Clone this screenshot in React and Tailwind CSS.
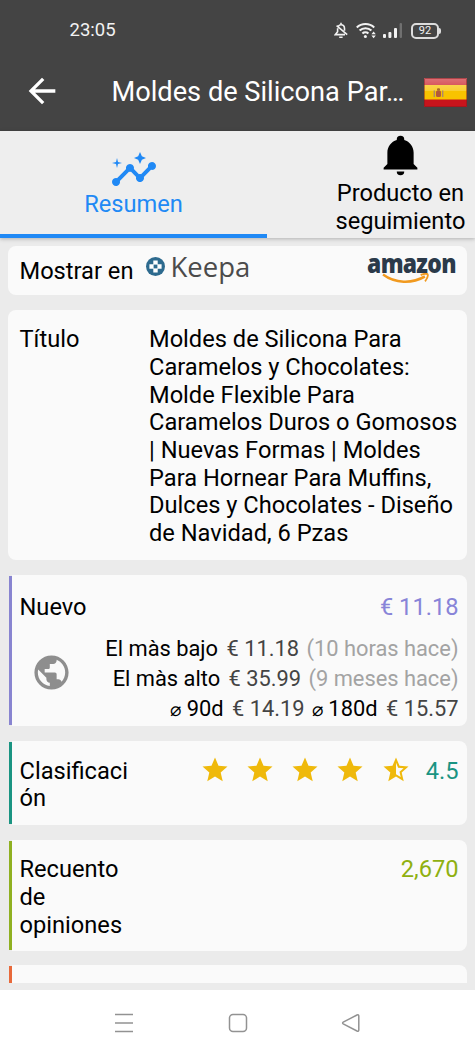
import React from "react";
import {
  MdArrowBack,
  MdInsights,
  MdPublic,
  MdStar,
  MdStarHalf,
} from "react-icons/md";

const title =
  "Moldes de Silicona Para Caramelos y Chocolates: Molde Flexible Para Caramelos Duros o Gomosos | Nuevas Formas | Moldes Para Hornear Para Muffins, Dulces y Chocolates - Diseño de Navidad, 6 Pzas";

function StatusBar() {
  return (
    <div className="flex h-[60px] items-center pr-[34px] pl-[69.5px] pt-px text-[#f2f2f2]">
      <span className="pt-px text-[18.5px]">23:05</span>
      <div className="ml-auto flex items-center">
        {/* Muted bell */}
        <svg width="14" height="17" viewBox="0 0 14 17" fill="none" stroke="currentColor" strokeWidth="1.6">
          <path d="M7 .8v1.7M4.300 4.200C5 3.200 6 2.700 7 2.700c2.200 0 3.500 1.600 3.500 3.800v2.300M3.600 6.200v3.600L1.400 12.600h9.600M5.200 15.200h3.400M2.600 3.600l10.600 9" />
        </svg>
        {/* Wifi */}
        <svg className="ml-[8px]" width="20" height="17" viewBox="0 0 20 17" fill="none" stroke="currentColor" strokeWidth="2.1">
          <path d="M.8 5.400c4.800-4.600 12.600-4.600 17.400 0M3.600 8.600c3.200-3.100 8.600-3.100 11.800 0M6.400 11.600c1.700-1.600 4.300-1.600 6 0" />
          <circle cx="9.4" cy="14.6" r="1.5" fill="currentColor" stroke="none" />
          <path d="m15.400 12.200 2.200-2.600 2.200 2.600zM15.400 13.600l2.200 2.600 2.200-2.600z" fill="currentColor" stroke="none" />
        </svg>
        {/* Signal */}
        <svg className="ml-[7px]" width="20" height="16" viewBox="0 0 20 16" fill="currentColor">
          <rect x="0" y="11" width="3" height="4" rx="1" />
          <rect x="5.4" y="9" width="3" height="6" rx="1" />
          <rect x="11" y="5" width="3" height="10" rx="1" />
          <rect x="16.6" y="0" width="2.4" height="15" rx="1" opacity=".25" />
        </svg>
        {/* Battery */}
        <div className="ml-2 flex items-center">
          <div className="flex h-4 w-[28px] items-center justify-center rounded-[5px] border-2 border-[#dcdcdc] text-[11px] leading-none">
            92
          </div>
          <div className="h-1.5 w-[2px] rounded-r bg-[#dcdcdc]" />
        </div>
      </div>
    </div>
  );
}

function SpainFlag() {
  return (
    <svg width="43" height="29" viewBox="0 0 43 29">
      <defs>
        <linearGradient id="gloss" x1="0" y1="0" x2="0" y2="1">
          <stop offset="0" stopColor="#fff" stopOpacity=".4" />
          <stop offset="1" stopColor="#fff" stopOpacity=".2" />
        </linearGradient>
      </defs>
      <rect width="43" height="29" rx="1" fill="#c8141c" />
      <rect y="7" width="43" height="14.5" fill="#f8c300" />
      <rect width="43" height="13" rx="1" fill="url(#gloss)" />
      <rect x="12" y="12.5" width="5" height="6.5" rx="1.5" fill="#b5583a" />
      <rect x="13" y="10.2" width="3" height="2.6" rx="1" fill="#a8692a" />
      <rect x="9.6" y="12.5" width="1.4" height="6.5" fill="#a98a70" />
      <rect x="18" y="12.5" width="1.4" height="6.5" fill="#a98a70" />
      <rect x=".5" y=".5" width="42" height="28" rx="1" fill="none" stroke="#7d1a20" strokeOpacity=".5" />
    </svg>
  );
}

function Header() {
  return (
    <header className="h-[131px] bg-[#444444] text-white">
      <StatusBar />
      <div className="flex h-[61px] items-center pr-2 pl-[21.5px]">
        <MdArrowBack className="size-10" />
        <h1 className="ml-[50px] w-[300px] pt-1 text-[27.2px] whitespace-nowrap">
          Moldes de Silicona Par…
        </h1>
        <div className="ml-auto pt-1">
          <SpainFlag />
        </div>
      </div>
    </header>
  );
}

function Tabs() {
  return (
    <nav className="relative z-10 flex h-[107px] overflow-x-clip bg-[#eeeeee] shadow-[0_1px_4px_rgba(0,0,0,0.25)]">
      <div className="flex w-[267px] shrink-0 flex-col items-center border-b-[4px] border-[#2089f5] pt-[15px] text-[#2089f5]">
        <MdInsights className="size-12" />
        <span className="-mt-[3px]">Resumen</span>
      </div>
      <div className="flex w-[267px] shrink-0 flex-col items-center pt-px">
        <svg className="size-[45px]" viewBox="0 0 24 24" fill="#000">
          <path d="M21 19v1H3v-1l2-2v-6c0-3.1 2.03-5.83 5-6.71V4a2 2 0 0 1 4 0v.29c2.97.88 5 3.61 5 6.71v6l2 2m-7 2a2 2 0 0 1-4 0" />
        </svg>
        <span className="mt-[3px] text-center">
          Producto en
          <br />
          seguimiento
        </span>
      </div>
    </nav>
  );
}

function KeepaLogo() {
  return (
    <div className="flex items-center gap-[5px]">
      <svg width="19" height="19" viewBox="0 0 19 19">
        <circle cx="9.5" cy="9.5" r="9.5" fill="#2d6a8e" />
        <path d="M7.3 3.4h4.4v3.9h3.9v4.4h-3.9v3.9H7.3v-3.9H3.4V7.3h3.9z" fill="#fff" />
        <path d="M7.6 7.6h3.8v3.8H7.6z" fill="#2d6a8e" />
      </svg>
      <span className="font-['Open_Sans',sans-serif] text-[27.5px] leading-[27px] text-[#4b4b4b]">
        Keepa
      </span>
    </div>
  );
}

function AmazonLogo() {
  return (
    <div className="flex origin-right scale-x-[0.88] flex-col items-center">
      <span className="font-['Open_Sans',sans-serif] text-[26px] leading-[20px] font-extrabold tracking-[-0.8px] text-[#2b3a4a]">
        amazon
      </span>
      <svg className="mr-3" width="55" height="12" viewBox="0 0 52 12" preserveAspectRatio="none" fill="none" stroke="#f19a1f">
        <path d="M1 1.500c13 9 31 9.500 45 2" strokeWidth="2.6" />
        <path d="M41.500 2c4-1.500 7-1.400 7.500-.6.5 1-.5 4.200-2.800 6.900" strokeWidth="1.9" />
      </svg>
    </div>
  );
}

function Card({ color, className = "", children }) {
  if (!color) {
    return (
      <section className={`mx-2 rounded-lg bg-[#fafafa] ${className}`}>
        {children}
      </section>
    );
  }
  return (
    <section className="mr-2 ml-[9px] flex">
      <div className={`my-px w-[3px] shrink-0 ${color}`} />
      <div className={`flex-1 rounded-r-lg bg-[#fafafa] ${className}`}>
        {children}
      </div>
    </section>
  );
}

function Rating() {
  return (
    <div className="flex text-[#efb90b]">
      {[1, 2, 3, 4].map((n) => (
        <MdStar key={n} className="mr-[15.3px] size-[30px]" />
      ))}
      <MdStarHalf className="size-[30px]" />
    </div>
  );
}

function PriceRow({ label, price, ago }) {
  return (
    <p>
      <span className="text-black">{label}</span>{" "}
      <span className="ml-[3px]">{price}</span>{" "}
      <span className="ml-[2px] text-[#a3a3a3]">{ago}</span>
    </p>
  );
}

function Content() {
  return (
    <main className="flex h-[745px] flex-col gap-[14.8px] overflow-hidden pt-2">
      <Card className="flex h-[49px] shrink-0 items-start pr-[11px] pl-[11.5px]">
        <span className="pt-3">Mostrar en</span>
        <div className="ml-[13px] pt-[7px]">
          <KeepaLogo />
        </div>
        <div className="ml-auto pt-[7px]">
          <AmazonLogo />
        </div>
      </Card>

      <Card className="flex h-[250px] shrink-0 pt-[16.4px] pl-[11.5px]">
        <span className="w-[129.5px] shrink-0">Título</span>
        <p className="w-[312px]">{title}</p>
      </Card>

      <Card color="bg-[#8884d0]" className="h-[151.5px] pt-[19px] pr-[8.5px] pl-[7.5px]">
        <div className="flex justify-between">
          <span>Nuevo</span>
          <span className="text-[#8884d8]">€ 11.18</span>
        </div>
        <div className="mt-[13px] flex items-start justify-between pl-[11px]">
          <MdPublic className="mt-[17.5px] size-[41px] text-[#8e8e8e]" />
          <div className="text-right text-[21.85px] leading-[29.8px] whitespace-nowrap text-[#444]">
            <PriceRow label="El màs bajo" price="€ 11.18" ago="(10 horas hace)" />
            <PriceRow label="El màs alto" price="€ 35.99" ago="(9 meses hace)" />
            <p>
              <span className="text-[18.5px] text-black">⌀</span>{" "}
              <span className="text-black">90d</span>{" "}
              <span className="ml-[3px]">€ 14.19</span>{" "}
              <span className="ml-[2px] text-[18.5px] text-black">⌀</span>{" "}
              <span className="text-black">180d</span>{" "}
              <span className="ml-[3px]">€ 15.57</span>
            </p>
          </div>
        </div>
      </Card>

      <Card color="bg-[#1a9482]" className="flex h-[84px] pt-[16.8px] pr-[8.5px] pl-[7.5px]">
        <span className="w-[110px] break-all">Clasificación</span>
        <div className="ml-auto flex">
          <div className="-mt-[3px]">
            <Rating />
          </div>
          <span className="ml-[15px] text-[#1a9482]">4.5</span>
        </div>
      </Card>

      <Card color="bg-[#8fb021]" className="flex h-[111px] pt-[16.8px] pr-[8.5px] pl-[7.5px]">
        <span className="w-[110px]">Recuento de opiniones</span>
        <span className="ml-auto text-[#8fb010]">2,670</span>
      </Card>

      <Card color="bg-[#e8693a]" className="h-[60px]" />
    </main>
  );
}

function NavigationBar() {
  return (
    <footer className="flex h-[66px] items-center justify-center gap-[93.5px] bg-white">
      <svg width="20" height="20" viewBox="0 0 20 20" stroke="#929292" strokeWidth="1.5">
        <path d="M1 1.500h18M1 10h18M1 18.500h18" />
      </svg>
      <svg width="20" height="20" viewBox="0 0 20 20" fill="none" stroke="#929292" strokeWidth="1.5">
        <rect x="1.5" y="1.5" width="17" height="17" rx="3.5" />
      </svg>
      <svg width="20" height="20" viewBox="0 0 20 20" fill="none" stroke="#929292" strokeWidth="1.5" strokeLinejoin="round">
        <path d="M16 2 2.200 9.200q-1.200.8 0 1.600L16 18q1.800.7 1.800-1V3q0-1.700-1.800-1z" />
      </svg>
    </footer>
  );
}

export default function App() {
  return (
    <div className="h-[1056px] w-[475px] overflow-hidden bg-[#ebebeb] font-[Roboto,sans-serif] text-[23.65px] leading-[27.7px] text-black">
      <Header />
      <Tabs />
      <Content />
      <div className="h-[7px]" />
      <NavigationBar />
    </div>
  );
}
